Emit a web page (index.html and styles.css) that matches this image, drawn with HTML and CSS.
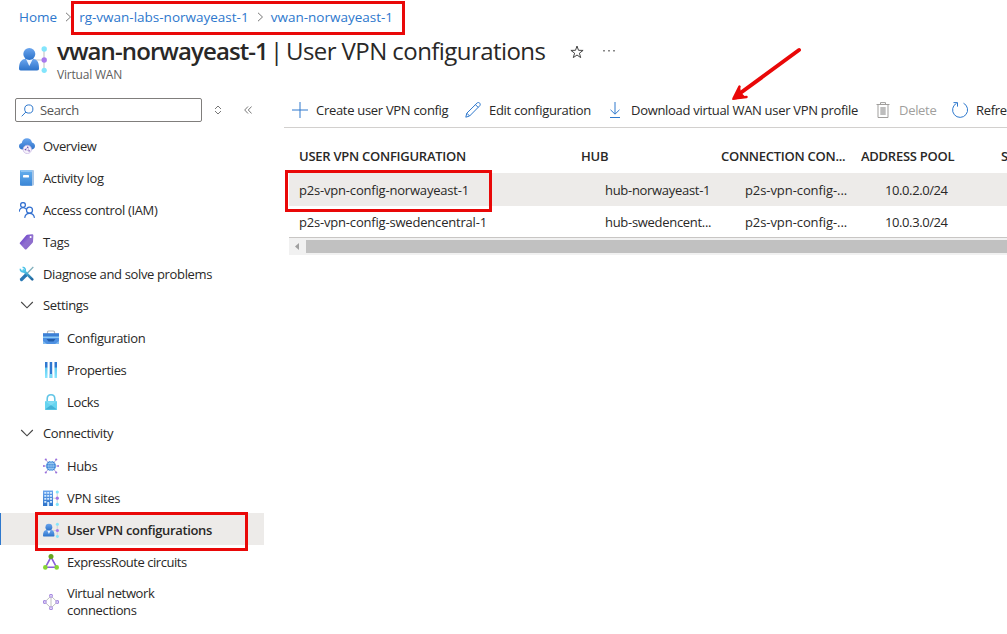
FILE: index.html
```html
<!DOCTYPE html>
<html lang="en">
<head>
<meta charset="utf-8">
<title>User VPN configurations</title>
<link rel="stylesheet" href="styles.css">
</head>
<body>
<svg class="defs" width="0" height="0">
  <defs>
    <linearGradient id="blue" x1="0" y1="0" x2="0" y2="1"><stop offset="0" stop-color="#6aa5ee"/><stop offset="1" stop-color="#2c72c9"/></linearGradient>
    <linearGradient id="book" x1="0" y1="0" x2="0" y2="1"><stop offset="0" stop-color="#66b0ee"/><stop offset="1" stop-color="#3b86d6"/></linearGradient>
    <linearGradient id="purple" x1="0" y1="0" x2="1" y2="1"><stop offset=".2" stop-color="#6f45cc"/><stop offset=".5" stop-color="#9070cf"/><stop offset="1" stop-color="#8a68c8"/></linearGradient>
    <linearGradient id="slider" x1="0" y1="0" x2="0" y2="1"><stop offset=".3" stop-color="#2f78d0"/><stop offset=".4" stop-color="#62cdf2"/><stop offset="1" stop-color="#8be6ff"/></linearGradient>
    <linearGradient id="tool" x1="0" y1="0" x2="0" y2="1"><stop offset="0" stop-color="#58cfee"/><stop offset="1" stop-color="#21679f"/></linearGradient>
    <symbol id="user-vpn" viewBox="0 0 28 28">
      <path d="M16 15h9M25 5v20" stroke="#c8c8c8" stroke-width="1.2" fill="none"/>
      <path d="M0 23.500c0-5 1.500-9 6-9.500h8.500c4.500.5 5.500 4.500 5.500 9.500 0 1.300-.5 2-2 2H1.700C.5 25.500 0 24.800 0 23.500z" fill="url(#blue)"/>
      <path d="M7 14l3.300 7 3.500-7z" fill="#eef5ff"/>
      <circle cx="10.300" cy="9" r="6" fill="url(#blue)"/>
      <circle cx="25.200" cy="4" r="2.700" fill="#83e5fc"/><circle cx="25.200" cy="15" r="2.700" fill="#a879ee"/><circle cx="25.200" cy="25.300" r="2.600" fill="#83e5fc"/>
    </symbol>
  </defs>
</svg>
<div class="page">
  <nav class="crumbs">
    <a>Home</a>
    <svg class="sep" viewBox="0 0 7 10"><path d="M1 .8l4.500 4.200L1 9.200"/></svg>
    <a>rg-vwan-labs-norwayeast-1</a>
    <svg class="sep" viewBox="0 0 7 10"><path d="M1 .8l4.500 4.200L1 9.200"/></svg>
    <a>vwan-norwayeast-1</a>
  </nav>
  <header class="head">
    <svg class="head-icon"><use href="#user-vpn"/></svg>
    <div class="titles">
      <h1><b>vwan-norwayeast-1</b><i>|</i><span>User VPN configurations</span></h1>
      <p>Virtual WAN</p>
    </div>
    <svg class="star" viewBox="0 0 14 14"><path d="M7 1l1.500 4.300 4.600.1-3.700 2.800 1.300 4.400L7 10l-3.700 2.600 1.300-4.400L.9 5.400l4.600-.1z" fill="none" stroke="#444"/></svg>
    <svg class="more" viewBox="0 0 12 2"><path d="M0 0h2v1.500H0zM5 0h2v1.500H5zM10 0h2v1.500h-2z" fill="#888"/></svg>
  </header>
  <div class="body">
    <aside class="side">
      <div class="search-row">
        <div class="search">
          <svg viewBox="0 0 13 13"><circle cx="7.800" cy="5" r="4.100"/><path d="M4.900 8L.7 12.300"/></svg><span>Search</span>
        </div>
        <svg class="updown" viewBox="0 0 8 10"><path d="M1 4l3-3 3 3M1 6l3 3 3-3"/></svg>
        <svg class="collapse" viewBox="0 0 8 8"><path d="M4 .5L.7 4 4 7.500M7.600.5L4.300 4l3.300 3.500"/></svg>
      </div>
      <ul class="menu">
        <li><svg viewBox="0 0 16 16"><path d="M3.500 11.500C1.500 11.500 0 10 0 8.200 0 6.500 1.200 5.300 2.800 5 3.200 2.200 5.300.2 8 .2c2.500 0 4.500 1.500 5 4.200 1.800.2 3 1.700 3 3.500 0 2-1.500 3.600-3.600 3.600z" fill="url(#blue)"/><circle cx="8.300" cy="11.400" r="4.200" fill="#f6f2fb" stroke="#c3b0e2" stroke-width=".7"/><path d="M6.400 11.500l2.300-2.300 1.500 3.800z" fill="none" stroke="#a28bcb" stroke-width=".6"/><circle cx="6.400" cy="11.600" r=".8" fill="#7650b4"/><circle cx="8.700" cy="9.200" r=".8" fill="#7650b4"/><circle cx="10.200" cy="12.900" r=".7" fill="#7650b4"/></svg><span>Overview</span></li>
        <li><svg viewBox="0 0 16 16"><path d="M3 0h10.500c1 0 1.500.5 1.500 1.300v13c0 .8-.5 1.400-1.500 1.400H3z" fill="#a9c6e6"/><path d="M2.300 0H13v15.700H2.300c-.8 0-1.300-.5-1.300-1.300V1.300C1 .5 1.500 0 2.300 0z" fill="url(#book)"/><path d="M2 1h11" stroke="#bcdcf8"/><rect x="4" y="5" width="6" height="2.500" rx=".4" fill="#fff"/></svg><span>Activity log</span></li>
        <li><svg viewBox="0 0 16 16" fill="none" stroke="#3471d0" stroke-width="1.250"><circle cx="4" cy="3" r="2.400"/><path d="M.2 9.800C.4 7.500 1.800 5.700 4 5.700c1.300 0 2.300.5 3 1.500"/><circle cx="10.500" cy="8.200" r="3"/><path d="M5.700 15.800c.4-2.700 2.300-4.400 4.800-4.400s4.500 1.700 5 4.400"/></svg><span>Access control (IAM)</span></li>
        <li><svg viewBox="0 0 16 16"><path d="M8.200.8L13 .2c.8 0 1.400.5 1.400 1.300l-.4 6.200c0 .4-.2.7-.4 1l-6.100 6.500c-.5.5-1.100.5-1.600 0L1.100 10c-.5-.5-.5-1.200 0-1.600L7.300 1.200z" fill="url(#purple)"/><circle cx="11.600" cy="3" r="1" fill="#fff"/></svg><span>Tags</span></li>
        <li><svg viewBox="0 0 16 16" fill="none"><path d="M14.300 1L8 7.500" stroke="#7eaebb" stroke-width="1.200"/><path d="M7 9l-4.500 4.500" stroke="#2878b5" stroke-width="3.200" stroke-linecap="round"/><path d="M4.500 4.500l8.800 8.800" stroke="url(#tool)" stroke-width="2.600" stroke-linecap="round"/><path d="M1.300 2.800C1.200 5.500 4 6.600 5.500 5.500S6.600 1.700 3.600 1.200" stroke="#4dc4e9" stroke-width="1.600"/></svg><span>Diagnose and solve problems</span></li>
        <li class="group"><svg viewBox="0 0 16 16"><path d="M2.200 5l5.800 5.800L13.800 5" fill="none" stroke="#444" stroke-width="1.100"/></svg><span>Settings</span></li>
        <li class="sub"><svg viewBox="0 0 16 16"><path d="M4.500 4V2c0-.6.400-1 1-1h5c.6 0 1 .4 1 1v2" fill="none" stroke="#b5b5b5" stroke-width="1.200"/><path d="M0 3.200h16v4H0z" fill="#3d80d5"/><path d="M0 6.500h16v1.800H0z" fill="#8ccaf6"/><path d="M0 8h16v6H0z" fill="#4d90e2"/><path d="M3.500 9h9l-2 2.500h-5z" fill="#225da9"/><path d="M0 14v-3l4 3zM16 14v-3l-4 3z" fill="#80bbef"/></svg><span>Configuration</span></li>
        <li class="sub"><svg viewBox="0 0 16 16"><path d="M2 0h2.500v16H2zM11.500 0H14v16h-2.500z" fill="url(#slider)"/><path d="M6.700 0h2.500v16H6.700z" fill="#2f78d0"/><path d="M6.700 12h2.500v4H6.700z" fill="#75dbf8"/></svg><span>Properties</span></li>
        <li class="sub"><svg viewBox="0 0 16 16"><path d="M4.200 8V5c0-2.500 1.500-4.200 3.800-4.200S11.800 2.500 11.800 5v3" fill="none" stroke="#62c5e6" stroke-width="1.600"/><rect x="2" y="7" width="12" height="9" rx=".8" fill="#65d4f0"/><path d="M2 15.500L8 11l6 4.500z" fill="#43b1d5"/><path d="M2.500 7.300L8 11.500l5.500-4.200z" fill="#7fdcf3"/></svg><span>Locks</span></li>
        <li class="group"><svg viewBox="0 0 16 16"><path d="M2.200 5l5.800 5.800L13.800 5" fill="none" stroke="#444" stroke-width="1.100"/></svg><span>Connectivity</span></li>
        <li class="sub"><svg viewBox="0 0 16 16"><path d="M3 2l2.500 3M13 2l-2.500 3M3 14l2.500-3M13 14l-2.500-3M0 8h3M13 8h3" stroke="#b6a6d5"/><circle cx="8" cy="8" r="5" fill="#3f88d8"/><path d="M3.200 8h9.600M8 3v10M4.500 5.500h7M4.500 10.500h7M8 3c-3 2-3 8 0 10M8 3c3 2 3 8 0 10" stroke="#b5dbf8" stroke-width=".6" fill="none"/><g fill="#9b71dd"><circle cx="2.800" cy="1.500" r="1.100"/><circle cx="13.200" cy="1.500" r="1.100"/><circle cx="2.800" cy="14.500" r="1.100"/><circle cx="13.200" cy="14.500" r="1.100"/><circle cx=".9" cy="8" r=".9"/><circle cx="15.100" cy="8" r=".9"/></g></svg><span>Hubs</span></li>
        <li class="sub"><svg viewBox="0 0 16 16"><path d="M10 8.200h4M14.200 2v13" stroke="#c6c6c6" stroke-width=".8"/><path d="M0 .5h10V16H0z" fill="url(#blue)"/><path d="M1.300 2h2v1.700h-2zM4.200 2h2v1.700h-2zM7 2h2v1.700H7zM1.300 5h2v1.700h-2zM4.200 5h2v1.700h-2zM7 5h2v1.700H7zM1.300 8h2v1.700h-2zM4.200 8h2v1.700h-2zM7 8h2v1.700H7zM1.300 11h2v1.700h-2zM7 11h2v1.700H7zM4.200 12h2v4h-2z" fill="#d5ebff"/><circle cx="14.300" cy="2" r="1.600" fill="#83e5fc"/><circle cx="14.300" cy="8.200" r="1.600" fill="#a074e8"/><circle cx="14.300" cy="14.400" r="1.600" fill="#83e5fc"/></svg><span>VPN sites</span></li>
        <li class="sub selected"><svg viewBox="0 0 16 16"><use href="#user-vpn" width="16" height="16"/></svg><span>User VPN configurations</span></li>
        <li class="sub"><svg viewBox="0 0 16 16"><path d="M8 3L2.500 13.200h11z" fill="none" stroke="#8a5ddc" stroke-width="1.600"/><circle cx="8" cy="2.600" r="2.500" fill="#65a51e"/><circle cx="2.300" cy="13.400" r="2.300" fill="#86d633"/><circle cx="13.700" cy="13.400" r="2.300" fill="#86d633"/></svg><span class="tight">ExpressRoute circuits</span></li>
        <li class="sub tall"><svg viewBox="0 0 16 16"><path d="M8 2L1.800 8 8 14l6.200-6zM8 2v12" fill="none" stroke="#c0c0c0"/><g fill="#f6f0ff" stroke="#a68ae0" stroke-width="1.100"><circle cx="8" cy="1.800" r="1.400"/><circle cx="8" cy="14.200" r="1.400"/><circle cx="1.800" cy="8" r="1.400"/><circle cx="14.200" cy="8" r="1.400"/></g></svg><span>Virtual network<br>connections</span></li>
      </ul>
    </aside>
    <main class="main">
      <div class="tools">
        <button class="t-create"><svg viewBox="0 0 16 16"><path d="M8 0v16M0 8h16"/></svg><span>Create user VPN config</span></button>
        <button class="t-edit"><svg viewBox="0 0 16 16"><path d="M.8 15.200l1-4L12 1.100c.8-.8 2-.8 2.700 0s.8 1.900 0 2.700L4.600 14zM10.500 2.700l2.700 2.700M1.800 11.200L4.600 14"/></svg><span>Edit configuration</span></button>
        <button class="t-download"><svg viewBox="0 0 16 16"><path d="M8 0v12M3.500 7.800L8 12.200l4.500-4.400M3 15.500h10"/></svg><span>Download virtual WAN user VPN profile</span></button>
        <button class="t-delete disabled"><svg viewBox="0 0 16 16"><path d="M1.500 2.500h13M5.500 2.500V.6h5v1.900M3 2.500v13h10v-13"/><path d="M5.300 5h5.400v8H5.300z" fill="#bdbdbd" stroke="none"/></svg><span>Delete</span></button>
        <button class="t-refresh"><svg viewBox="0 0 16 16"><path d="M11.500 1.200A7.500 7.500 0 1 1 4.500 1.300M1.500.6h4v4"/></svg><span>Refresh</span></button>
      </div>
      <div class="table">
        <div class="row thead"><span>USER VPN CONFIGURATION</span><span>HUB</span><span>CONNECTION CON...</span><span>ADDRESS POOL</span><span>STATUS</span></div>
        <div class="row on"><span class="name">p2s-vpn-config-norwayeast-1</span><span>hub-norwayeast-1</span><span class="conn">p2s-vpn-config-...</span><span class="pool">10.0.2.0/24</span></div>
        <div class="row"><span class="name">p2s-vpn-config-swedencentral-1</span><span>hub-swedencent...</span><span class="conn">p2s-vpn-config-...</span><span class="pool">10.0.3.0/24</span></div>
        <div class="scroll"><svg viewBox="0 0 4 7"><path d="M4 0v7L0 3.500z" fill="#a0a0a0"/></svg><div class="thumb"></div></div>
      </div>
    </main>
  </div>
  <div class="mark mark-crumbs"></div>
  <div class="mark mark-row"></div>
  <div class="mark mark-nav"></div>
  <svg class="arrow" viewBox="0 0 76 60"><path d="M69 6L9 50" stroke="#e90808" stroke-width="4" stroke-linecap="round"/><path d="M2 56L10 42l1 6.500 5 5z" fill="#e90808"/><path d="M9.500 42.500L3.500 54.500 16.500 53" fill="none" stroke="#e90808" stroke-width="2.500" stroke-linecap="round" stroke-linejoin="round"/></svg>
</div>
</body>
</html>
```
FILE: styles.css
```css
* { box-sizing: border-box; }
body { margin: 0; background: #fff; color: #292827; font: 13px/16px "Open Sans", "Noto Sans", sans-serif; letter-spacing: -0.3px; }
.defs { position: absolute; }
.page { position: relative; width: 1007px; height: 634px; overflow: hidden; }
svg { display: block; flex: none; }
span, a { white-space: nowrap; }
.crumbs { display: flex; align-items: center; height: 34px; padding-left: 19px; color: #2e78cd; font-size: 13.5px; letter-spacing: 0; }
.sep { width: 7px; height: 10px; margin: 0 7px 0 8px; fill: none; stroke: #777; stroke-width: 1; }
.head { display: flex; height: 55px; padding-left: 19px; }
.head-icon { width: 28px; height: 28px; margin: 11px 10px 0 0; }
.titles { width: 513px; }
h1 { display: flex; margin: 0; height: 33px; font-size: 24px; line-height: 34px; font-weight: 400; white-space: nowrap; }
h1 b { width: 213px; font-weight: 600; letter-spacing: -0.9px; }
h1 i { width: 16px; font-style: normal; letter-spacing: 0; }
h1 span { letter-spacing: -0.57px; }
p { margin: 0; font-size: 12px; line-height: 16px; color: #605e5c; letter-spacing: -0.2px; }
.star { width: 14px; height: 14px; margin-top: 11px; }
.more { width: 12px; height: 2px; margin: 16px 0 0 19px; }
.body { display: flex; }
.side { width: 284px; padding-top: 9px; }
.search-row { display: flex; align-items: center; height: 24px; margin-bottom: 7px; padding-left: 15px; }
.search { display: flex; align-items: center; gap: 6px; width: 187px; height: 24px; padding-left: 5px; border: 1px solid #807e7c; border-radius: 2px; color: #555; letter-spacing: -0.4px; }
.search svg { width: 13px; height: 13px; fill: none; stroke: #2e78cd; stroke-width: 1; }
.updown { width: 8px; height: 10px; margin-left: 12px; fill: none; stroke: #777; }
.collapse { width: 8px; height: 8px; margin-left: 22px; fill: none; stroke: #777; }
.menu { margin: 0; padding: 0; list-style: none; letter-spacing: -0.35px; }
.menu li { display: flex; align-items: center; gap: 8px; width: 264px; height: 32px; padding: 2px 0 0 19px; }
.menu svg { width: 16px; height: 16px; }
.menu .group { padding-top: 0; }
.menu .sub { padding-left: 43px; }
.menu .selected { padding-left: 42px; border-left: 1px solid #2e78cd; background: #edebe9; font-weight: 600; }
.menu .tall { height: 50px; padding-top: 0; line-height: 17px; }
.menu .tight { letter-spacing: -0.45px; }
.main { flex: 1; width: 723px; overflow: hidden; }
.tools { display: flex; height: 39px; padding: 4px 0 0 8px; border-bottom: 1px solid #d2d0ce; }
button { display: flex; align-items: center; gap: 8px; flex: none; height: 34px; padding: 0; border: 0; background: none; color: inherit; font: inherit; letter-spacing: inherit; text-align: left; }
.tools svg { width: 16px; height: 16px; margin-top: -1px; fill: none; stroke: #2e78cd; stroke-width: 1; }
.t-create { width: 173px; }
.t-edit { width: 142px; }
.t-download { width: 268px; }
.t-delete { width: 77px; }
.tools .disabled { color: #a19f9d; }
.tools .disabled svg { stroke: #a19f9d; }
.table { width: 718px; margin-left: 5px; }
.row { display: grid; grid-template-columns: 306px 140px 140px 140px 60px; align-items: center; height: 31px; padding-left: 10px; }
.on { height: 33px; background: #edebe9; }
.thead { grid-template-columns: 282px 140px 140px 140px 60px; height: 45px; padding-top: 11px; font-weight: 600; letter-spacing: -0.26px; }
.name { letter-spacing: -0.19px; }
.conn { letter-spacing: -0.08px; }
.pool { letter-spacing: -0.4px; }
.scroll { display: flex; align-items: center; height: 18px; padding-left: 6px; border-top: 1px solid #c8c6c4; background: #f1f1f1; }
.scroll svg { width: 4px; height: 7px; }
.thumb { width: 710px; height: 13px; margin-left: 7px; background: #c1c1c1; }
.mark { position: absolute; border: 3px solid #e90808; }
.mark-crumbs { left: 71px; top: 1px; width: 334px; height: 34px; }
.mark-row { left: 285px; top: 170px; width: 207px; height: 42px; }
.mark-nav { left: 35px; top: 512px; width: 213px; height: 39px; }
.arrow { position: absolute; left: 730px; top: 44px; width: 76px; height: 60px; }
```
